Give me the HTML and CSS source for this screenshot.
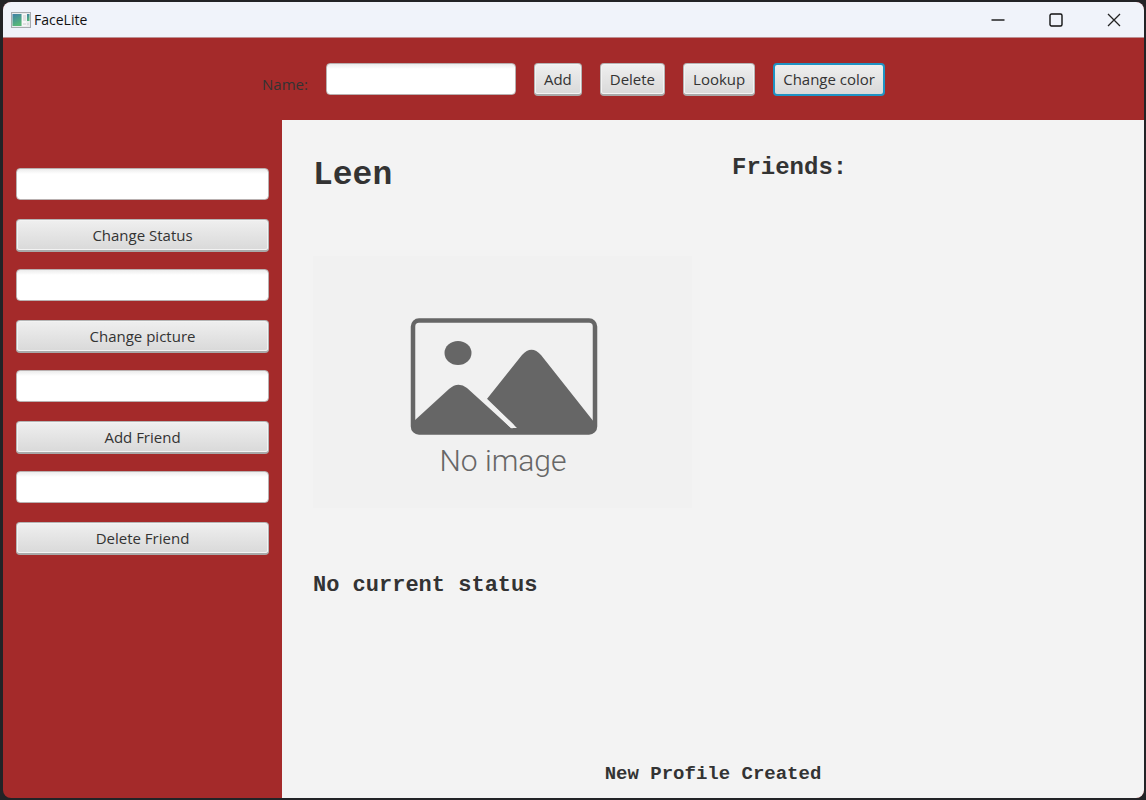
FILE: index.html
```html
<!DOCTYPE html>
<html lang="en">
<head>
  <meta charset="UTF-8" />
  <meta name="viewport" content="width=device-width, initial-scale=1.0" />
  <title>FaceLite</title>
  <link rel="stylesheet" href="styles.css">
</head>
<body>
  <div class="window">
    <header class="titlebar">
      <svg class="app-icon" viewBox="0 0 20 16" aria-hidden="true">
        <defs>
          <linearGradient id="iconFill" x1="0" y1="0" x2="0.4" y2="1">
            <stop offset="0" stop-color="#3f7fa8" />
            <stop offset="1" stop-color="#58b878" />
          </linearGradient>
        </defs>
        <rect x="0.5" y="0.5" width="19" height="15" fill="#e9ebec" stroke="#a7abae" />
        <rect x="1.5" y="2" width="9" height="12" fill="url(#iconFill)" />
        <rect x="11" y="2" width="4.500" height="12" fill="#f7f7f7" />
        <path d="M12 4h3M12 6h3M12 8h3M12 12h3M16 12h2" stroke="#c8cbcd" />
        <rect x="16" y="2" width="2.500" height="7" fill="url(#iconFill)" />
      </svg>
      <span class="app-name">FaceLite</span>
      <div class="window-buttons">
        <button type="button" aria-label="Minimize">
          <svg viewBox="0 0 14 14"><path d="M0.500 7h13" stroke="#222" stroke-width="1.400" /></svg>
        </button>
        <button type="button" aria-label="Maximize">
          <svg viewBox="0 0 14 14"><rect x="1" y="1" width="12" height="12" rx="1.500" fill="none" stroke="#111" stroke-width="1.400" /></svg>
        </button>
        <button type="button" aria-label="Close">
          <svg viewBox="0 0 14 14"><path d="M1 1l12 12M13 1L1 13" stroke="#222" stroke-width="1.300" /></svg>
        </button>
      </div>
    </header>

    <form class="toolbar">
      <label for="name">Name:</label>
      <input type="text" id="name" class="name-field" />
      <button type="button" class="btn">Add</button>
      <button type="button" class="btn">Delete</button>
      <button type="button" class="btn">Lookup</button>
      <button type="button" class="btn focused">Change color</button>
    </form>

    <div class="body">
      <form class="sidebar">
        <div class="field">
          <input type="text" aria-label="Status" />
          <button type="button" class="btn">Change Status</button>
        </div>
        <div class="field">
          <input type="text" aria-label="Picture" />
          <button type="button" class="btn">Change picture</button>
        </div>
        <div class="field">
          <input type="text" aria-label="Friend to add" />
          <button type="button" class="btn">Add Friend</button>
        </div>
        <div class="field">
          <input type="text" aria-label="Friend to delete" />
          <button type="button" class="btn">Delete Friend</button>
        </div>
      </form>

      <main class="canvas">
        <div class="columns">
          <section class="profile">
            <h1>Leen</h1>
            <svg class="picture" viewBox="0 0 379 252" role="img" aria-label="No image">
              <rect width="379" height="252" fill="#f1f1f1" />
              <rect x="100" y="64.500" width="182" height="112" rx="6" fill="none" stroke="#666" stroke-width="4.500" />
              <ellipse cx="145" cy="97" rx="13.500" ry="12" fill="#666" />
              <path d="M101 165L136 133Q145 125 154 132L198 172H206V176H104Q100 176 100 172Z" fill="#666" />
              <path d="M173.500 143.500L209 99Q218.500 88.500 228 99L281 166V176H204V172Z" fill="#666" />
              <path d="M168 140L199 170" stroke="#f1f1f1" stroke-width="4.500" stroke-linecap="round" />
              <text x="190" y="215" class="picture-text">No image</text>
            </svg>
            <p class="status">No current status</p>
          </section>
          <section class="friends">
            <h2>Friends:</h2>
          </section>
        </div>
        <p class="message">New Profile Created</p>
      </main>
    </div>
  </div>
</body>
</html>
```

FILE: styles.css
```css
* {
  box-sizing: border-box;
}
body {
  margin: 0;
  padding: 2px 2px 2px 3px;
  height: 100vh;
  background: #222326;
  font-family: "Open Sans", "Noto Sans", sans-serif;
  color: #333;
}
.window {
  display: flex;
  flex-direction: column;
  height: 100%;
  background: #a42a2a;
  border-radius: 8px;
  overflow: hidden;
}
h1, h2, p {
  margin: 0;
}

/* title bar */
.titlebar {
  display: flex;
  align-items: center;
  height: 36px;
  padding: 0 1px 0 8px;
  background: #f0f3fa;
  border-bottom: 1px solid #bd8f92;
}
.app-icon {
  width: 20px;
  height: 16px;
}
.app-name {
  margin-left: 3px;
  font-size: 14px;
  color: #111;
}
.window-buttons {
  display: flex;
  height: 100%;
  margin-left: auto;
}
.window-buttons button {
  display: flex;
  align-items: center;
  justify-content: center;
  width: 58px;
  padding: 0;
  border: none;
  background: none;
}
.window-buttons svg {
  width: 14px;
  height: 14px;
}

/* form controls */
input {
  height: 32px;
  padding: 4px 8px;
  border: 1px solid #b9b0b0;
  border-radius: 4px;
  background: linear-gradient(#ececec, #fff 5px);
  font: inherit;
}
.btn {
  height: 33px;
  padding: 0 9px;
  border: 1px solid #b5b5b5;
  border-bottom: 2px solid #a9a9a9;
  border-radius: 4px;
  background: linear-gradient(#efefef, #d9d9d9);
  box-shadow: inset 0 0 0 1px #f3f3f3;
  font-family: inherit;
  font-size: 15px;
  color: #333;
}
.btn.focused {
  padding: 0 8px 2px;
  border: 2px solid #1f93c4;
  box-shadow: none;
}

/* top row */
.toolbar {
  display: flex;
  justify-content: center;
  gap: 18px;
  height: 82px;
  padding-top: 25px;
}
.toolbar label {
  padding-top: 11px;
  font-size: 15px;
  line-height: 20px;
}
.name-field {
  width: 190px;
}

.body {
  display: flex;
  flex: 1;
}
.sidebar {
  display: flex;
  flex-direction: column;
  gap: 17px;
  width: 279px;
  padding: 48px 13px;
}
.field {
  display: flex;
  flex-direction: column;
  gap: 19px;
}

/* profile area */
.canvas {
  display: flex;
  flex: 1;
  flex-direction: column;
  justify-content: space-between;
  padding-bottom: 12px;
  background: #f3f3f3;
  font-family: "Liberation Mono", "Courier New", monospace;
  font-weight: bold;
}
.columns {
  display: flex;
  gap: 40px;
  padding: 32px 0 0 31px;
}
.profile {
  flex: 0 0 379px;
}
h1 {
  font-size: 33px;
  line-height: 48px;
}
h2 {
  font-size: 24px;
  line-height: 32px;
}
.picture {
  display: block;
  width: 100%;
  margin: 56px 0 64px;
}
.picture-text {
  font-family: Roboto, "Liberation Sans", sans-serif;
  font-size: 30px;
  font-weight: 300;
  text-anchor: middle;
  fill: #666;
}
.status {
  font-size: 22px;
  line-height: 28px;
}
.message {
  font-size: 19px;
  line-height: 24px;
  text-align: center;
}
```
